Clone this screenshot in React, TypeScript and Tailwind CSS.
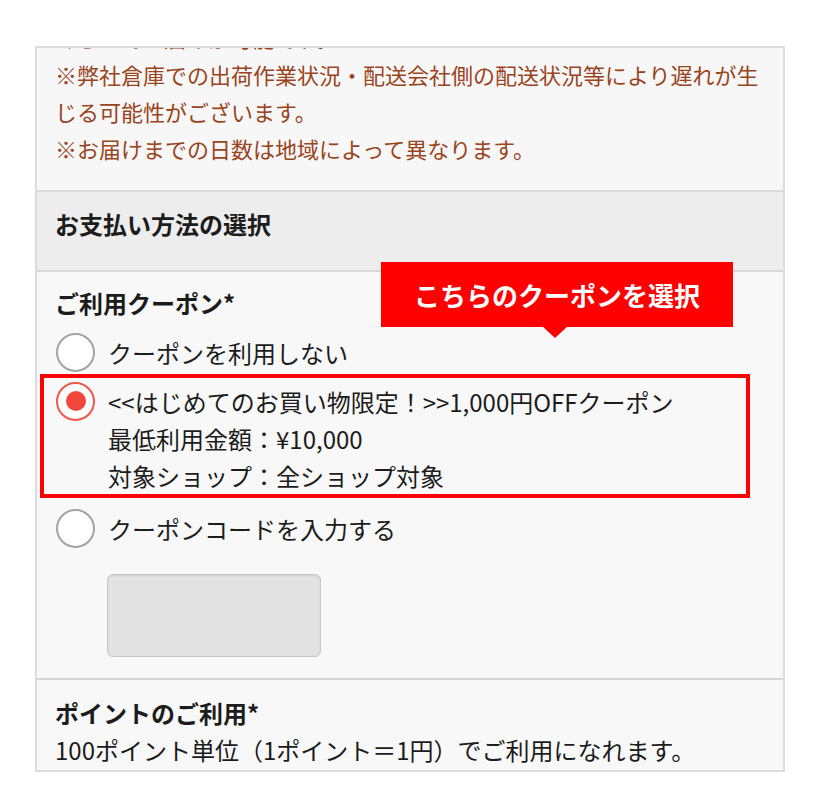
import React from "react";

const Radio = ({ checked }: { checked?: boolean }) =>
  checked ? (
    <span className="flex h-[39px] w-[39px] shrink-0 items-center justify-center rounded-full border-2 border-[#f2564b] bg-white">
      <span className="h-[20px] w-[20px] rounded-full bg-[#f2473d]" />
    </span>
  ) : (
    <span className="h-[39px] w-[39px] shrink-0 rounded-full border-2 border-[#a3a3a3] bg-white" />
  );

export default function App() {
  return (
    <div className="relative h-[806px] w-[820px] overflow-hidden bg-white pl-[35px] pt-[46px] font-['Noto_Sans_CJK_JP','Noto_Sans',sans-serif] text-[#1c1c1c]">
      <div className="h-[726px] w-[750px] overflow-hidden border-2 border-[#dcdcdc] bg-[#f8f8f8]">
        {/* delivery notes */}
        <div className="-mt-[29px] border-b-2 border-[#dadada] bg-[#f7f7f7] px-[18px] pb-[23px] text-[22px] leading-[37px] text-[#9a441d]">
          <p>くらいでお届けが可能です。</p>
          <p>
            ※弊社倉庫での出荷作業状況・配送会社側の配送状況等により遅れが生
            <br />
            じる可能性がございます。
          </p>
          <p>※お届けまでの日数は地域によって異なります。</p>
        </div>

        {/* payment heading */}
        <div className="h-[80px] border-b-2 border-[#d8d8d8] bg-[#ededed] px-[18px] pt-[12.5px] text-[24px] font-bold leading-[37px]">
          お支払い方法の選択
        </div>

        {/* coupon */}
        <div className="border-b-2 border-[#d6d6d6] bg-[#f8f8f8] pb-[21px] pt-[11.5px]">
          <p className="px-[18px] text-[24px] font-bold leading-[37px]">ご利用クーポン*</p>

          <div className="mt-[12px] flex h-[39px] items-center gap-[13px] pl-[19px]">
            <Radio />
            <span className="text-[24px] leading-[37px]">クーポンを利用しない</span>
          </div>

          <div className="ml-[3px] mt-[2.5px] flex w-[710px] gap-[13px] border-4 border-[#ff0000] pl-[12px] pt-[4.5px]">
            <div className="-mt-px">
              <Radio checked />
            </div>
            <div className="text-[24px] leading-[37px]">
              <p>&lt;&lt;はじめてのお買い物限定！&gt;&gt;1,000円OFFクーポン</p>
              <p>最低利用金額：¥10,000</p>
              <p>対象ショップ：全ショップ対象</p>
            </div>
          </div>

          <div className="mt-[11px] flex h-[39px] items-center gap-[13px] pl-[19px]">
            <Radio />
            <span className="text-[24px] leading-[37px]">クーポンコードを入力する</span>
          </div>

          <div className="ml-[70px] mt-[26px] h-[83px] w-[214px] rounded-[6px] border border-[#c6c6c6] bg-[#e2e2e2] shadow-[inset_0_1px_2px_rgba(0,0,0,0.08)]" />
        </div>

        {/* points */}
        <div className="bg-[#f8f8f8] px-[18px] pt-[14.5px] text-[24px] leading-[37px]">
          <p className="font-bold">ポイントのご利用*</p>
          <p>100ポイント単位（1ポイント＝1円）でご利用になれます。</p>
        </div>
      </div>

      {/* callout */}
      <div className="absolute left-[381px] top-[262px] flex h-[65px] w-[352px] items-center justify-center bg-[#fe0000] text-[26px] font-bold text-white">
        こちらのクーポンを選択
        <span className="absolute left-[161px] top-[64px] h-0 w-0 border-x-[13px] border-t-[12px] border-x-transparent border-t-[#fe0000]" />
      </div>
    </div>
  );
}
